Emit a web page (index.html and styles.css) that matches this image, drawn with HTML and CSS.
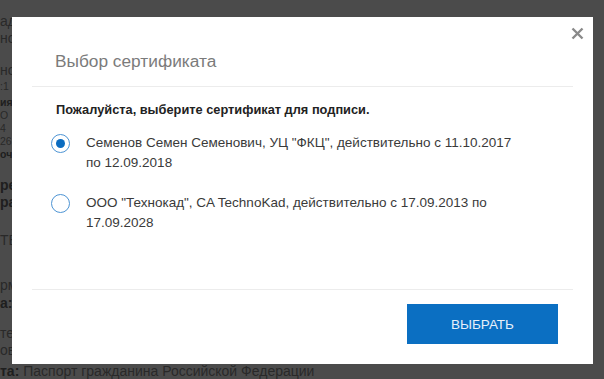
FILE: index.html
```html
<!DOCTYPE html>
<html lang="ru">
<head>
<meta charset="utf-8">
<title>Выбор сертификата</title>
<link rel="stylesheet" href="styles.css">
</head>
<body>
<div class="page">
  <div class="bg-lines">
    <div class="bl l1">ад</div>
    <div class="bl l2">но</div>
    <div class="bl l3">но</div>
    <div class="bl l4 sm">:1</div>
    <div class="bl l5 b sm">ия</div>
    <div class="bl l6 sm">О</div>
    <div class="bl l7 sm">4</div>
    <div class="bl l8 sm">26</div>
    <div class="bl l9 b sm">оч</div>
    <div class="bl l10 b">ре</div>
    <div class="bl l11 b">ра</div>
    <div class="bl l12">ТВ</div>
    <div class="bl l13">рм</div>
    <div class="bl l14 b">а:</div>
    <div class="bl l15">те</div>
    <div class="bl l16">ов</div>
    <div class="bl l17"><span class="b">та:</span> Паспорт гражданина Российской Федерации</div>
  </div>
</div>
<div class="overlay"></div>
<div class="modal">
  <button class="close" aria-label="Закрыть">
    <svg width="13" height="13" viewBox="0 0 13 13"><path d="M1.5 1.5L11.5 11.5M11.5 1.5L1.5 11.5" stroke="#8a8a8a" stroke-width="2.4" stroke-linecap="butt"/></svg>
  </button>
  <div class="modal-header">
    <h2 class="modal-title">Выбор сертификата</h2>
  </div>
  <div class="modal-body">
    <p class="prompt">Пожалуйста, выберите сертификат для подписи.</p>
    <div class="options">
      <label class="option">
        <span class="radio checked"><span class="dot"></span></span>
        <span class="opt-text">Семенов Семен Семенович, УЦ "ФКЦ", действительно с 11.10.2017<br>по 12.09.2018</span>
      </label>
      <label class="option">
        <span class="radio"></span>
        <span class="opt-text">ООО "Технокад", CA TechnoKad, действительно с 17.09.2013 по<br>17.09.2028</span>
      </label>
    </div>
  </div>
  <div class="modal-footer">
    <button class="btn-primary">ВЫБРАТЬ</button>
  </div>
</div>
</body>
</html>
```

FILE: styles.css
```css
* { box-sizing: border-box; }
html, body {
  margin: 0;
  padding: 0;
  width: 604px;
  height: 379px;
  overflow: hidden;
  font-family: "Liberation Sans", Arial, sans-serif;
}
.page {
  width: 604px;
  height: 379px;
  background: #ffffff;
  color: #8c8c8c;
  position: relative;
}
.bg-lines {
  position: relative;
  width: 604px;
  height: 379px;
  font-size: 14px;
  line-height: 16px;
}
.bl { position: absolute; left: 0; white-space: nowrap; }
.sm { font-size: 10.5px; line-height: 12px; }
.b { font-weight: bold; color: #6a6a6a; }
.l1 { top: 13px; }
.l2 { top: 30px; }
.l3 { top: 62px; }
.l4 { top: 80px; }
.l5 { top: 96px; }
.l6 { top: 109px; }
.l7 { top: 122px; }
.l8 { top: 135px; }
.l9 { top: 148px; }
.l10 { top: 177px; }
.l11 { top: 194px; }
.l12 { top: 232px; }
.l13 { top: 277px; }
.l14 { top: 295px; }
.l15 { top: 325px; }
.l16 { top: 342px; }
.l17 { top: 363px; }
.overlay {
  position: absolute;
  inset: 0;
  background: rgba(0, 0, 0, 0.705);
}
.modal {
  position: absolute;
  left: 12px;
  top: 17px;
  width: 581px;
  height: 347px;
  background: #ffffff;
  display: flex;
  flex-direction: column;
}
.close {
  position: absolute;
  right: 9px;
  top: 10px;
  width: 13px;
  height: 13px;
  padding: 0;
  border: 0;
  background: none;
  display: block;
}
.close svg { display: block; }
.modal-header {
  margin: 0 20px;
  padding: 34px 0 15px 23px;
  border-bottom: 1px solid #ececec;
}
.modal-title {
  margin: 0;
  font-size: 17.3px;
  line-height: 20px;
  font-weight: normal;
  color: #7b7b7b;
}
.modal-body {
  flex: 1;
  margin: 0 20px;
  padding: 15px 0 0 24px;
  border-bottom: 1px solid #ececec;
}
.prompt {
  margin: 0 0 15px;
  font-size: 12.8px;
  line-height: 16px;
  font-weight: bold;
  color: #222222;
}
.options {
  display: flex;
  flex-direction: column;
  gap: 20px;
  margin-left: -5px;
}
.option {
  display: flex;
  align-items: flex-start;
  gap: 16px;
}
.radio {
  flex: none;
  width: 19px;
  height: 19px;
  margin-top: 0.5px;
  border: 1.5px solid #4d94d4;
  border-radius: 50%;
  display: flex;
  align-items: center;
  justify-content: center;
}
.dot {
  width: 9px;
  height: 9px;
  border-radius: 50%;
  background: #0b6cc0;
}
.opt-text {
  font-size: 13.5px;
  line-height: 20px;
  color: #3a3a3a;
}
.modal-footer {
  margin: 0 20px;
  padding: 14px 15px 20px 0;
  display: flex;
  justify-content: flex-end;
}
.btn-primary {
  width: 151px;
  height: 40px;
  border: 0;
  background: #0b6fc2;
  color: #e6f0fa;
  font-family: "Liberation Sans", Arial, sans-serif;
  font-size: 13.5px;
  padding: 0;
}
```
